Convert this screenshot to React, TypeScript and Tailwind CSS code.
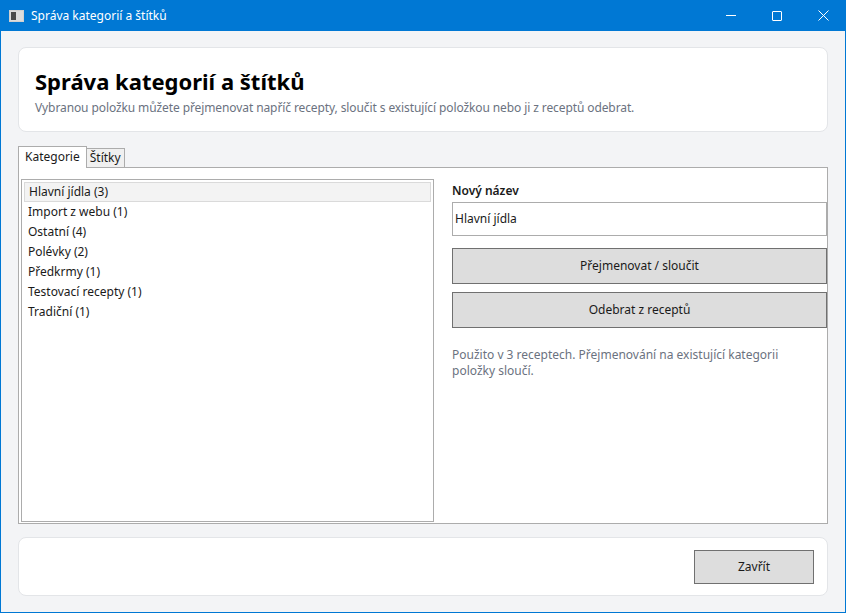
export default function App() {
  const items = ["Hlavní jídla (3)", "Import z webu (1)", "Ostatní (4)", "Polévky (2)", "Předkrmy (1)", "Testovací recepty (1)", "Tradiční (1)"];
  return (
    <div className="w-[846px] h-[613px] flex flex-col bg-[#0078d4] text-[12px] text-[#1a1a1a] overflow-hidden" style={{ fontFamily: '"Segoe UI", "Noto Sans", sans-serif' }}>
      <div className="h-[31px] flex items-center shrink-0 text-white">
        <div className="ml-[9px] w-[15px] h-[12px] border border-[#d0d0d0] bg-[#dcdcdc] flex">
          <div className="w-[5px] bg-[#4a4a4a] m-[1px]" />
        </div>
        <span className="ml-[7px] text-[12px]">Správa kategorií a štítků</span>
        <div className="ml-auto flex items-center h-full">
          <div className="w-[46px] flex justify-center"><div className="w-[10px] h-px bg-white" /></div>
          <div className="w-[46px] flex justify-center"><div className="w-[10px] h-[10px] border border-white rounded-[1px]" /></div>
          <div className="w-[46px] flex justify-center">
            <svg width="11" height="11" viewBox="0 0 11 11" stroke="white" strokeWidth="1"><path d="M0.5 0.5L10.5 10.5M10.5 0.5L0.5 10.5" /></svg>
          </div>
        </div>
      </div>
      <div className="flex-1 mx-px mb-px bg-[#f3f4f6] px-[17px] pt-[16px] flex flex-col">
        <div className="h-[85px] bg-white border border-[#e3e5e8] rounded-[8px] px-[16px] pt-[18px]">
          <div className="text-[22px] font-bold leading-[30px] text-black">Správa kategorií a štítků</div>
          <div className="text-[#6b7280] mt-[3px] tracking-[-0.1px]">Vybranou položku můžete přejmenovat napříč recepty, sloučit s existující položkou nebo ji z receptů odebrat.</div>
        </div>
        <div className="mt-[13px] flex items-end h-[22px]">
          <div className="h-[22px] px-[6px] bg-white border border-[#acacac] border-b-0 flex items-center relative z-10 -mb-px pb-px">Kategorie</div>
          <div className="h-[19px] px-[3px] bg-[#f0f0f0] border border-[#acacac] border-b-0 border-l-0 flex items-center">Štítky</div>
        </div>
        <div className="h-[357px] bg-white border border-[#acacac] flex">
          <div className="mt-[11px] ml-[2px] w-[413px] h-[343px] border border-[#acacac] p-[2px]">
            {items.map((t, i) => (
              <div key={t} className={`h-[20px] flex items-center px-[4px] ${i === 0 ? "bg-[#f3f3f3] border border-[#dadada] px-[3px]" : ""}`}>{t}</div>
            ))}
          </div>
          <div className="ml-[18px] w-[375px] pt-[14px] flex flex-col">
            <div className="font-semibold h-[18px]">Nový název</div>
            <div className="mt-[2px] h-[34px] border border-[#acacac] flex items-center px-[2px]">Hlavní jídla</div>
            <div className="mt-[12px] h-[36px] border border-[#707070] bg-[#dddddd] flex items-center justify-center">Přejmenovat / sloučit</div>
            <div className="mt-[8px] h-[36px] border border-[#707070] bg-[#dddddd] flex items-center justify-center">Odebrat z receptů</div>
            <div className="mt-[19px] text-[#6b7280] leading-[16px] pr-[10px]">Použito v 3 receptech. Přejmenování na existující kategorii položky sloučí.</div>
          </div>
        </div>
        <div className="mt-[13px] h-[59px] bg-white border border-[#e3e5e8] rounded-[8px] flex items-center justify-end pr-[13px]">
          <div className="w-[120px] h-[34px] border border-[#707070] bg-[#dddddd] flex items-center justify-center">Zavřít</div>
        </div>
      </div>
    </div>
  );
}
